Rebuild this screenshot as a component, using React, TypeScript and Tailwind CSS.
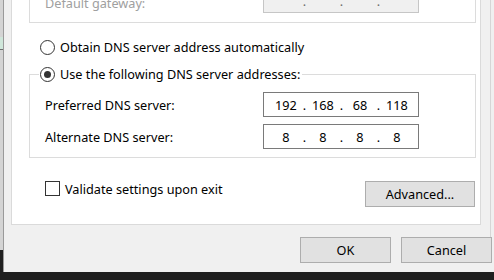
import { Fragment } from 'react';

function IpBox({ parts, disabled }: { parts: string[]; disabled?: boolean }) {
  return (
    <div
      className={
        disabled
          ? 'flex h-[25px] w-[156px] items-center border border-[#c6c6c6] bg-[#f0f0f0] pl-[6px] text-[#6d6d6d]'
          : 'flex h-[25px] w-[156px] items-center border border-[#7a7a7a] bg-white pl-[6px]'
      }
    >
      {parts.map((p, i) => (
        <Fragment key={i}>
          {i > 0 && <span className="w-[5px] text-center">.</span>}
          <span className="w-[32px] text-center">{p}</span>
        </Fragment>
      ))}
    </div>
  );
}

function Radio({ checked }: { checked?: boolean }) {
  return (
    <span className="flex h-[15px] w-[15px] shrink-0 items-center justify-center rounded-full border border-[#333333] bg-white">
      {checked && <span className="h-[7px] w-[7px] rounded-full bg-[#333333]" />}
    </span>
  );
}

function Button({ label, className }: { label: string; className: string }) {
  return (
    <div className={`flex items-center justify-center border border-[#adadad] bg-[#e1e1e1] ${className}`}>
      {label}
    </div>
  );
}

export default function App() {
  return (
    <div className="flex h-[280px] w-[494px] flex-col overflow-hidden bg-[#1f1f1f] font-['Noto_Sans',sans-serif] text-[12.7px] leading-[18px] text-black">
      <div className="flex h-[272px]">
        <div className="flex w-[3px] flex-col">
          <div className="h-[37px] bg-[#d4d4d4]" />
          <div className="h-[12px] bg-[#cfe6da]" />
          <div className="h-px bg-[#6f6f6f]" />
          <div className="h-[200px] bg-[#d4d4d4]" />
        </div>
        <div className="w-px bg-[#9a9a9a]" />
        <div className="flex flex-1 flex-col bg-[#f0f0f0]">
          <div className="flex h-[237px] items-start">
            <div className="ml-[7px] flex h-[225px] w-[470px] flex-col overflow-hidden border-x border-b border-[#dadada] bg-white">
              <div className="-mt-[15px] ml-[17px] flex h-[38px] w-[447px] shrink-0 items-end border-x border-b border-[#dcdcdc] pb-[9px] pl-[15px]">
                <div className="flex items-center">
                  <span className="mt-[5px] w-[218px] text-[#a0a0a0]">Default gateway:</span>
                  <IpBox parts={['', '', '', '']} disabled />
                </div>
              </div>

              <div className="ml-[28px] mt-[15px] flex h-[18px] items-center gap-[5px]">
                <Radio />
                <span>Obtain DNS server address automatically</span>
              </div>

              <fieldset className="ml-[17px] mt-[9px] w-[447px] border border-[#dcdcdc] pb-[8px] pl-[9px]">
                <legend className="flex h-[18px] items-center gap-[5px] pl-[1px] pr-[2px]">
                  <Radio checked />
                  <span>Use the following DNS server addresses:</span>
                </legend>
                <div className="mt-[9px] flex items-center pl-[6px]">
                  <span className="w-[218px]">Preferred DNS server:</span>
                  <IpBox parts={['192', '168', '68', '118']} />
                </div>
                <div className="mt-[7px] flex items-center pl-[6px]">
                  <span className="w-[218px]">Alternate DNS server:</span>
                  <IpBox parts={['8', '8', '8', '8']} />
                </div>
              </fieldset>

              <div className="mt-[23px] flex items-start justify-between pl-[33px] pr-[5px]">
                <div className="flex h-[15px] items-center gap-[5px]">
                  <span className="h-[15px] w-[15px] border border-[#333333] bg-white" />
                  <span>Validate settings upon exit</span>
                </div>
                <Button label="Advanced..." className="h-[26px] w-[110px]" />
              </div>
            </div>
            <div className="ml-[9px] h-full w-px bg-[#d6d6d6]" />
          </div>

          <div className="flex justify-end gap-[10px] pr-[2px]">
            <Button label="OK" className="h-[26px] w-[91px]" />
            <Button label="Cancel" className="h-[26px] w-[91px]" />
          </div>
        </div>
      </div>
    </div>
  );
}
